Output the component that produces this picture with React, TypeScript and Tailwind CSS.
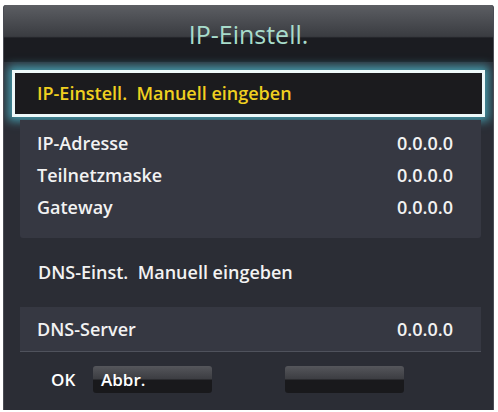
import React from 'react';

const rows = [
  { label: 'IP-Adresse', value: '0.0.0.0' },
  { label: 'Teilnetzmaske', value: '0.0.0.0' },
  { label: 'Gateway', value: '0.0.0.0' },
];

const App: React.FC = () => {
  return (
    <div className="w-[498px] h-[412px] bg-white pt-[5px] pl-[3px] font-['Open_Sans',sans-serif]">
      <div className="w-[491px] h-[405px] bg-[#2b2d35] rounded-t-[3px] border-x border-[#4a4c54] flex flex-col overflow-hidden">
        {/* Title bar */}
        <div className="h-[57px] shrink-0 bg-[linear-gradient(to_bottom,#5c5e63_0%,#3a3c41_55%,#1b1c21_58%,#1b1c21_100%)] flex items-center justify-center">
          <span className="text-[25px] leading-none text-[#a8dccb] mt-[2px]">IP-Einstell.</span>
        </div>

        {/* Selected item */}
        <div className="mt-[8px] mx-[8px] h-[47px] shrink-0 border-[3px] border-[#eef9fa] bg-[#1b1b1e] shadow-[0_0_9px_4px_rgba(80,200,220,0.7)] flex items-center pl-[22px]">
          <span className="text-[18px] font-semibold text-[#f0d020] whitespace-pre">IP-Einstell.  Manuell eingeben</span>
        </div>

        {/* IP rows */}
        <div className="mt-[3px] ml-[16px] mr-[12px] h-[118px] shrink-0 bg-[#363842] rounded-b-[3px] pt-[7px] pl-[17px] pr-[28px] flex flex-col">
          {rows.map((r) => (
            <div key={r.label} className="h-[32px] flex items-center justify-between text-[18px] font-semibold text-[#f2f2f2]">
              <span>{r.label}</span>
              <span>{r.value}</span>
            </div>
          ))}
        </div>

        <div className="h-[69px] shrink-0 flex items-center pl-[34px] text-[18px] font-semibold text-[#f2f2f2] whitespace-pre">
          DNS-Einst.  Manuell eingeben
        </div>

        <div className="ml-[16px] mr-[12px] h-[45px] shrink-0 bg-[#363842] border-b border-[#4f525c] flex items-center justify-between pl-[17px] pr-[28px] text-[18px] font-semibold text-[#f2f2f2]">
          <span>DNS-Server</span>
          <span>0.0.0.0</span>
        </div>

        {/* Buttons */}
        <div className="mt-[14px] h-[27px] flex items-center">
          <span className="ml-[47px] w-[42px] text-[17px] font-semibold text-white">OK</span>
          <div className="w-[119px] h-[27px] rounded-[3px] bg-[linear-gradient(to_bottom,#55565b_0%,#3c3d42_48%,#19191c_52%,#19191c_100%)] flex items-center pl-[8px] text-[17px] font-semibold text-white">
            Abbr.
          </div>
          <div className="ml-[73px] w-[119px] h-[27px] rounded-[3px] bg-[linear-gradient(to_bottom,#55565b_0%,#3c3d42_48%,#19191c_52%,#19191c_100%)]" />
        </div>
      </div>
    </div>
  );
};

export default App;
